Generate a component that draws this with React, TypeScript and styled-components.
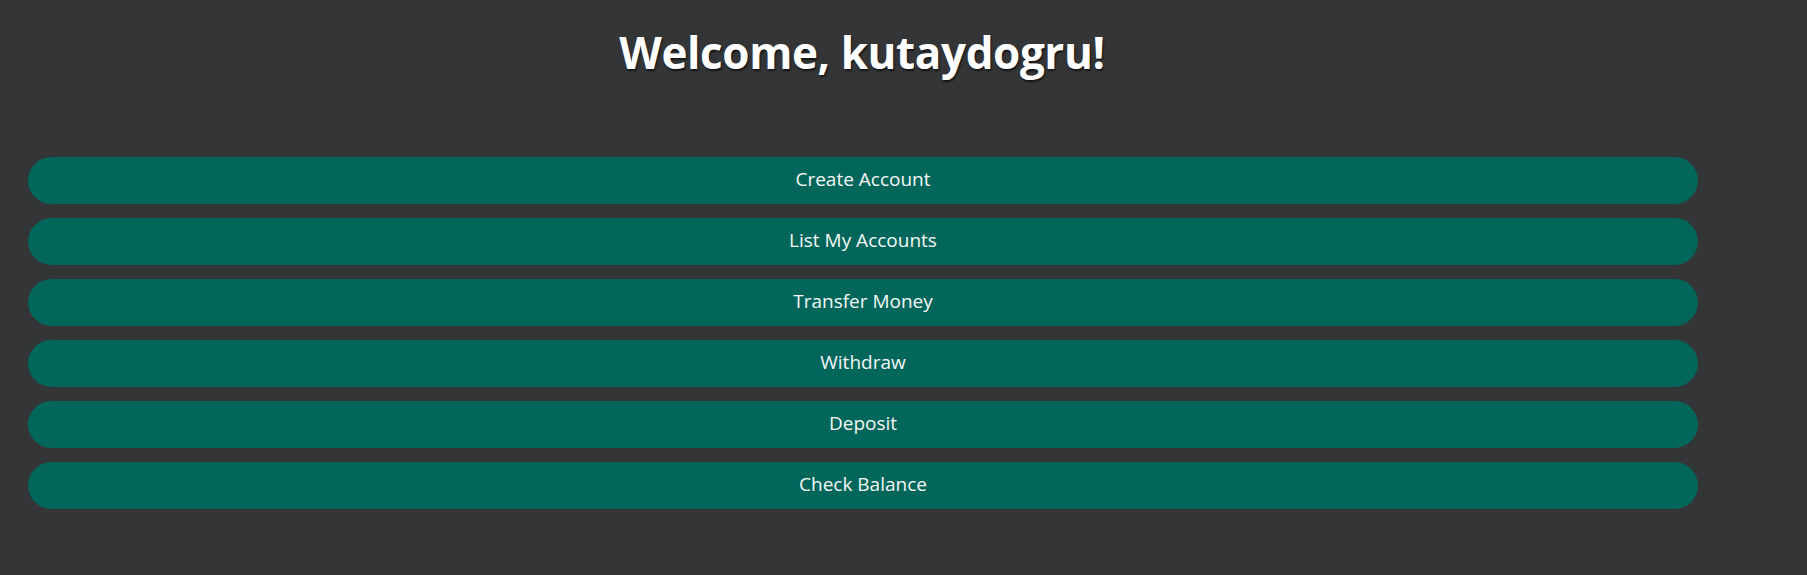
import React from 'react';
import styled, { createGlobalStyle } from 'styled-components';

const Global = createGlobalStyle`
  html, body {
    margin: 0;
    padding: 0;
    background: #333536;
  }
  body {
    font-family: "Open Sans", "Noto Sans", sans-serif;
  }
`;

const Page = styled.div`
  width: 1807px;
  height: 575px;
  background: #333536;
  display: flex;
  flex-direction: column;
`;

const Title = styled.h1`
  margin: 0;
  padding-top: 22px;
  width: 1724px;
  text-align: center;
  color: #ffffff;
  font-size: 44px;
  font-weight: 700;
  line-height: 60px;
  letter-spacing: -0.4px;
  text-shadow: 1px 2px 2px rgba(0, 0, 0, 0.6);
`;

const Menu = styled.div`
  display: flex;
  flex-direction: column;
  gap: 14px;
  margin-top: 75px;
  margin-left: 28px;
  width: 1670px;
`;

const MenuButton = styled.button`
  height: 47px;
  border: none;
  border-radius: 24px;
  background: #02665a;
  color: #f4f8f7;
  font-family: "Open Sans", "Noto Sans", sans-serif;
  font-size: 19px;
  cursor: pointer;
  padding: 0 0 3px;
`;

const items = [
  'Create Account',
  'List My Accounts',
  'Transfer Money',
  'Withdraw',
  'Deposit',
  'Check Balance',
];

const App: React.FC = () => {
  return (
    <>
      <Global />
      <Page>
        <Title>Welcome, kutaydogru!</Title>
        <Menu>
          {items.map((label) => (
            <MenuButton key={label}>{label}</MenuButton>
          ))}
        </Menu>
      </Page>
    </>
  );
};

export default App;
